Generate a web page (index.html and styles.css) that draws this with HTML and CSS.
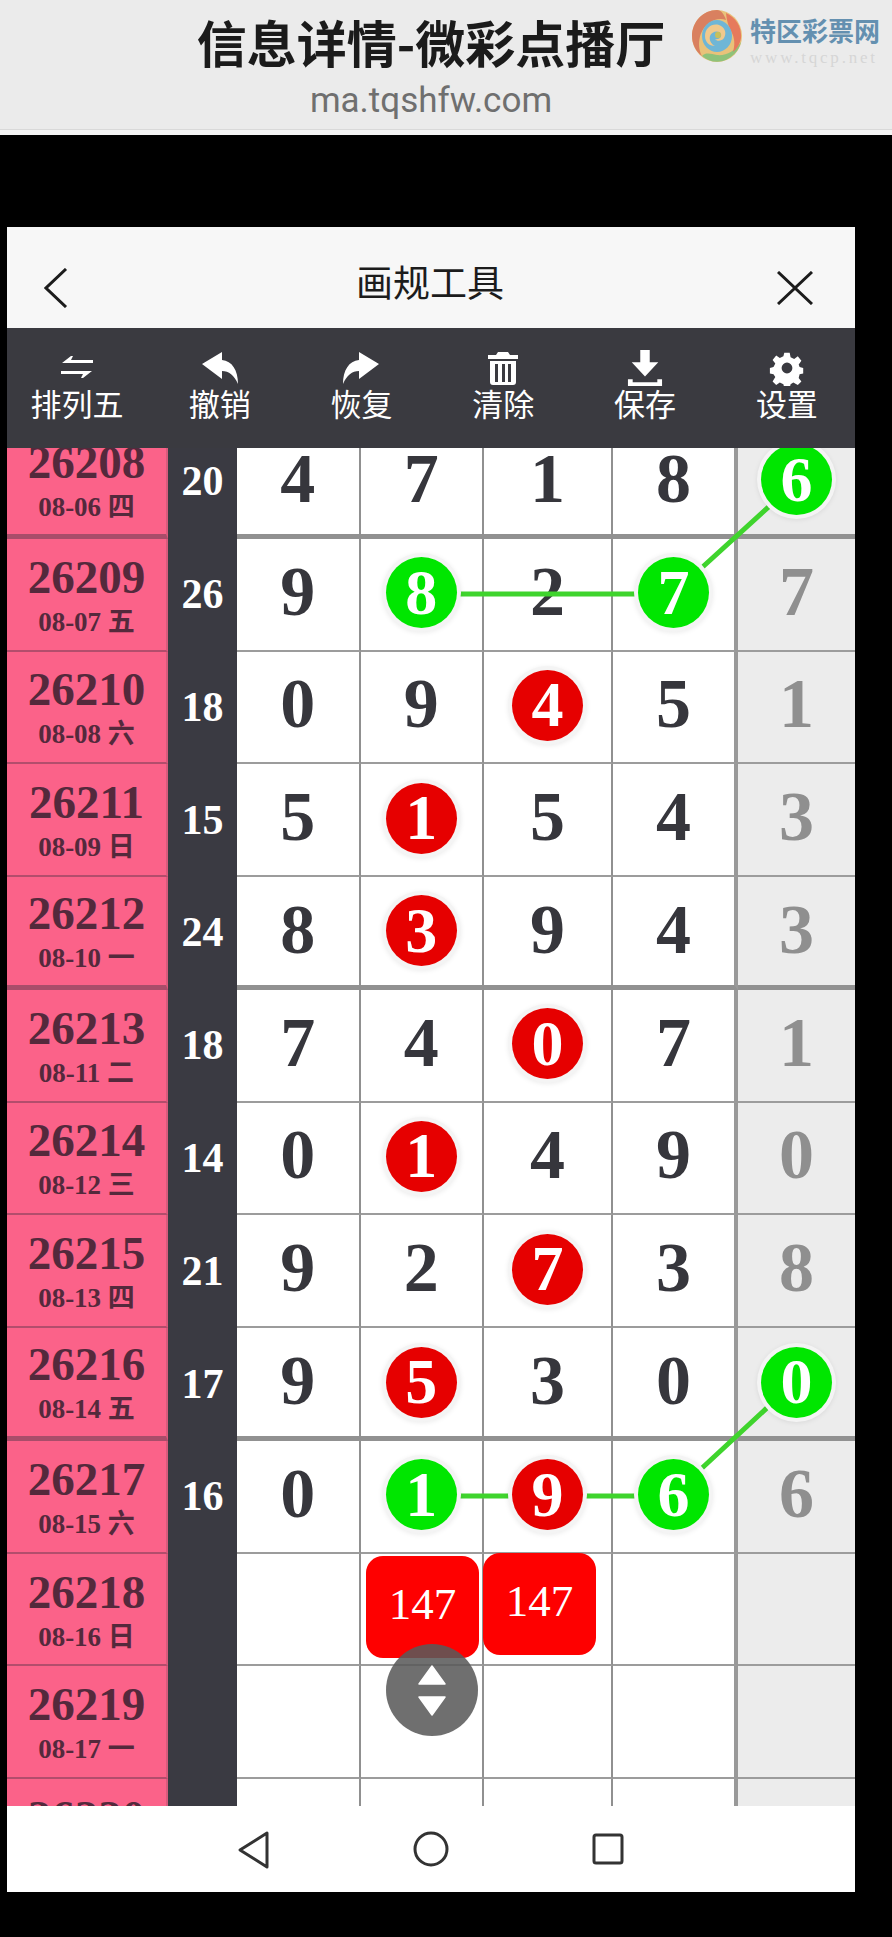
FILE: index.html
```html
<!DOCTYPE html>
<html lang="zh">
<head>
<meta charset="utf-8">
<title>画规工具</title>
<link rel="stylesheet" href="styles.css">
</head>
<body>
<header class="topbar">
  <div class="topbar-text">
    <div class="page-title">信息详情-微彩点播厅</div>
    <div class="page-url">ma.tqshfw.com</div>
  </div>
  <div class="brand">
    <svg class="brand-mark" viewBox="0 0 52 54" width="52" height="54" aria-hidden="true">
      <ellipse cx="26" cy="27" rx="25" ry="26" fill="#e9c27a"/>
      <path d="M26 1C12 1 1 13 1 27c0 8 4 16 10 20C6 38 7 22 18 14c5-4 12-5 17-3-2-6-5-10-9-10z" fill="#d9805f"/>
      <path d="M11 47c6 5 13 7 21 5 9-3 16-10 18-19-6 9-15 14-24 13-6-1-11-3-15 1z" fill="#8fc27a"/>
      <path d="M35 4c9 4 16 13 15 25-1 6-4 11-8 14 2-7 2-14-2-21-2-4-4-8-5-18z" fill="#e67a5c"/>
      <ellipse cx="26" cy="27" rx="15" ry="16" fill="#6fb6d6"/>
      <path d="M14 27c0-8 7-13 14-11 6 2 8 8 5 13-2 3-7 4-9 1 4 1 7-2 6-5-2-4-9-3-11 2-1 4 1 8 5 10-6 0-10-4-10-10z" fill="#f0c98c"/>
      <ellipse cx="27" cy="26" rx="3" ry="3.2" fill="#c7c05c"/>
    </svg>
    <div class="brand-text">
      <div class="brand-name">特区彩票网</div>
      <div class="brand-site">www.tqcp.net</div>
    </div>
  </div>
</header>

<main class="app">
  <div class="app-head">
    <svg class="head-icon" viewBox="0 0 24 40" width="24" height="40" aria-hidden="true"><path d="M22 1 2 20l20 19" fill="none" stroke="#1c1c1c" stroke-width="3"/></svg>
    <div class="app-title">画规工具</div>
    <svg class="head-icon" viewBox="0 0 36 34" width="36" height="34" aria-hidden="true"><path d="M1 1l34 32M35 1 1 33" fill="none" stroke="#1c1c1c" stroke-width="3"/></svg>
  </div>

  <nav class="toolbar">
    <div class="tool">
      <svg class="tool-icon" viewBox="0 0 36 36" width="36" height="36" aria-hidden="true"><path d="M3 13 12 6h2l-2 4h22v3zM33 21l-9 7h-2l2-4H2v-3z" fill="#fff"/></svg>
      <span>排列五</span>
    </div>
    <div class="tool">
      <svg class="tool-icon" viewBox="0 0 36 36" width="36" height="36" aria-hidden="true"><path d="M0 14 20 2v8c10 1 16 10 16 24-4-9-9-13-16-13v8z" fill="#fff"/></svg>
      <span>撤销</span>
    </div>
    <div class="tool">
      <svg class="tool-icon" viewBox="0 0 36 36" width="36" height="36" aria-hidden="true"><path d="M36 14 16 2v8C6 11 0 20 0 34c4-9 9-13 16-13v8z" fill="#fff"/></svg>
      <span>恢复</span>
    </div>
    <div class="tool">
      <svg class="tool-icon" viewBox="0 0 36 36" width="36" height="36" aria-hidden="true"><path d="M13 2h10l2 3h8v4H3V5h8zM5 11h26v21c0 2-1 3-3 3H8c-2 0-3-1-3-3zm5 3v18h3V14zm7 0v18h3V14zm6 0v18h3V14z" fill="#fff" fill-rule="evenodd"/></svg>
      <span>清除</span>
    </div>
    <div class="tool">
      <svg class="tool-icon" viewBox="0 0 38 38" width="38" height="38" aria-hidden="true"><path d="M14 0h10v13h9L19 28 5 13h9zM1 31h5v3h26v-3h5v7H1z" fill="#fff"/></svg>
      <span>保存</span>
    </div>
    <div class="tool">
      <svg class="tool-icon" viewBox="0 0 40 40" width="36" height="36" aria-hidden="true"><path d="M17 3h6l1 5 4 2 4-3 4 5-3 4 1 3 4 1v6l-4 1-1 4 3 4-4 4-5-3-3 2-1 4h-6l-1-4-4-2-4 3-4-4 3-5-2-3-4-1v-6l4-1 2-4-3-4 4-5 4 3 4-2zm3 11a6 6 0 1 0 0 12 6 6 0 0 0 0-12z" fill="#fff" fill-rule="evenodd"/></svg>
      <span>设置</span>
    </div>
  </nav>

  <section class="board">
    <div class="sheet">
      <svg class="links" viewBox="0 0 848 1480" width="848" height="1480" aria-hidden="true">
        <path d="M789 56 667 167M414 168H667M789 955 667 1068M414 1070H667" fill="none" stroke="#3fd42d" stroke-width="5"/>
      </svg>

      <div class="row major">
        <div class="issue"><b>26208</b><small>08-06 四</small></div><div class="sum">20</div>
        <div class="cell">4</div><div class="cell">7</div><div class="cell">1</div><div class="cell">8</div><div class="cell extra"><i class="ball green">6</i></div>
      </div>
      <div class="row">
        <div class="issue"><b>26209</b><small>08-07 五</small></div><div class="sum">26</div>
        <div class="cell">9</div><div class="cell"><i class="ball green">8</i></div><div class="cell">2</div><div class="cell"><i class="ball green">7</i></div><div class="cell extra">7</div>
      </div>
      <div class="row">
        <div class="issue"><b>26210</b><small>08-08 六</small></div><div class="sum">18</div>
        <div class="cell">0</div><div class="cell">9</div><div class="cell"><i class="ball red">4</i></div><div class="cell">5</div><div class="cell extra">1</div>
      </div>
      <div class="row">
        <div class="issue"><b>26211</b><small>08-09 日</small></div><div class="sum">15</div>
        <div class="cell">5</div><div class="cell"><i class="ball red">1</i></div><div class="cell">5</div><div class="cell">4</div><div class="cell extra">3</div>
      </div>
      <div class="row major">
        <div class="issue"><b>26212</b><small>08-10 一</small></div><div class="sum">24</div>
        <div class="cell">8</div><div class="cell"><i class="ball red">3</i></div><div class="cell">9</div><div class="cell">4</div><div class="cell extra">3</div>
      </div>
      <div class="row">
        <div class="issue"><b>26213</b><small>08-11 二</small></div><div class="sum">18</div>
        <div class="cell">7</div><div class="cell">4</div><div class="cell"><i class="ball red">0</i></div><div class="cell">7</div><div class="cell extra">1</div>
      </div>
      <div class="row">
        <div class="issue"><b>26214</b><small>08-12 三</small></div><div class="sum">14</div>
        <div class="cell">0</div><div class="cell"><i class="ball red">1</i></div><div class="cell">4</div><div class="cell">9</div><div class="cell extra">0</div>
      </div>
      <div class="row">
        <div class="issue"><b>26215</b><small>08-13 四</small></div><div class="sum">21</div>
        <div class="cell">9</div><div class="cell">2</div><div class="cell"><i class="ball red">7</i></div><div class="cell">3</div><div class="cell extra">8</div>
      </div>
      <div class="row major">
        <div class="issue"><b>26216</b><small>08-14 五</small></div><div class="sum">17</div>
        <div class="cell">9</div><div class="cell"><i class="ball red">5</i></div><div class="cell">3</div><div class="cell">0</div><div class="cell extra"><i class="ball green">0</i></div>
      </div>
      <div class="row">
        <div class="issue"><b>26217</b><small>08-15 六</small></div><div class="sum">16</div>
        <div class="cell">0</div><div class="cell"><i class="ball green">1</i></div><div class="cell"><i class="ball red">9</i></div><div class="cell"><i class="ball green">6</i></div><div class="cell extra">6</div>
      </div>
      <div class="row">
        <div class="issue"><b>26218</b><small>08-16 日</small></div><div class="sum"></div>
        <div class="cell"></div><div class="cell"><span class="tile tile-low">147</span></div><div class="cell"><span class="tile tile-high">147</span></div><div class="cell"></div><div class="cell extra"></div>
      </div>
      <div class="row">
        <div class="issue"><b>26219</b><small>08-17 一</small></div><div class="sum"></div>
        <div class="cell"></div><div class="cell"></div><div class="cell"></div><div class="cell"></div><div class="cell extra"></div>
      </div>
      <div class="row">
        <div class="issue"><b>26220</b><small>08-18 二</small></div><div class="sum"></div>
        <div class="cell"></div><div class="cell"></div><div class="cell"></div><div class="cell"></div><div class="cell extra"></div>
      </div>
    </div>

    <div class="scroll-btn">
      <svg viewBox="0 0 30 52" width="30" height="52" aria-hidden="true"><path d="M15 2 28 20H2zM2 33h26L15 51z" fill="#fff" stroke="#fff" stroke-width="1.5" stroke-linejoin="round"/></svg>
    </div>
  </section>

  <footer class="sysnav">
    <svg viewBox="0 0 32 38" width="32" height="38" aria-hidden="true"><path d="M29 2v34L2 19z" fill="none" stroke="#333" stroke-width="3" stroke-linejoin="round"/></svg>
    <svg viewBox="0 0 36 36" width="36" height="36" aria-hidden="true"><circle cx="18" cy="18" r="16" fill="none" stroke="#333" stroke-width="3"/></svg>
    <svg viewBox="0 0 32 32" width="32" height="32" aria-hidden="true"><rect x="2" y="2" width="28" height="28" rx="2" fill="none" stroke="#333" stroke-width="3"/></svg>
  </footer>
</main>
</body>
</html>
```

FILE: styles.css
```css
* { box-sizing: border-box; }

html, body { margin: 0; padding: 0; background: #000; }

body {
  width: 892px;
  height: 1937px;
  overflow: hidden;
  font-family: "Noto Sans CJK SC", "Noto Sans", sans-serif;
}

/* browser title strip */
.topbar {
  position: relative;
  height: 135px;
  background: #ebebeb;
  border-bottom: 5px solid #f4f4f4;
  box-shadow: inset 0 -1px 0 #d9d9d9;
  display: flex;
  justify-content: center;
}

.topbar-text { text-align: center; margin-left: -30px; }

.page-title {
  margin-top: 11px;
  font-size: 50px;
  line-height: 60px;
  font-weight: 700;
  color: #1b1b1b;
  white-space: nowrap;
}

.page-url {
  margin-top: 9px;
  font-family: "Roboto", "Noto Sans", sans-serif;
  font-size: 35px;
  line-height: 42px;
  color: #6f6f6f;
}

.brand {
  position: absolute;
  left: 691px;
  top: 9px;
  display: flex;
  gap: 7px;
}

.brand-name {
  margin-top: 3px;
  font-size: 26px;
  line-height: 36px;
  font-weight: 700;
  color: #6490b0;
  white-space: nowrap;
}

.brand-site {
  margin-top: 2px;
  font-family: "Liberation Serif", serif;
  font-size: 17px;
  line-height: 15px;
  letter-spacing: 2.8px;
  color: #d6d6d6;
  white-space: nowrap;
}

/* phone window */
.app {
  width: 848px;
  margin: 92px 0 0 7px;
  display: flex;
  flex-direction: column;
}

.app-head {
  height: 101px;
  background: #f7f7f7;
  padding: 20px 42px 0 37px;
  display: flex;
  align-items: center;
  justify-content: space-between;
}

.app-title {
  margin: -14px 0 0 15px;
  font-size: 37px;
  line-height: 48px;
  color: #1c1c1c;
}

.toolbar {
  height: 120px;
  background: #3a3a40;
  display: grid;
  grid-template-columns: repeat(6, 141.8px);
}

.tool {
  display: flex;
  flex-direction: column;
  align-items: center;
  padding-top: 22px;
  color: #fff;
  font-size: 31px;
  line-height: 40px;
}

.tool:first-child { padding-right: 2px; }

.tool-icon { display: block; height: 36px; margin-bottom: -3px; }

/* lottery table */
.board {
  position: relative;
  height: 1358px;
  overflow: hidden;
  background: #fff;
}

.sheet { position: relative; margin-top: -22px; }

.links {
  position: absolute;
  left: 0;
  top: 0;
  z-index: 2;
}

.row {
  display: grid;
  grid-template-columns: 161px 69px 123.5px 123.5px 129px 125px 117px;
  height: 112.77px;
}

.issue, .sum, .cell {
  display: flex;
  align-items: center;
  justify-content: center;
}

.issue {
  flex-direction: column;
  padding-top: 1px;
  background: #fb6289;
  color: #54293c;
  font-family: "Liberation Serif", "Noto Sans CJK SC", serif;
  border-bottom: 2px solid #b34d6c;
  border-right: 2px solid #d85a7c;
}

.issue b {
  font-size: 47px;
  line-height: 48px;
  font-weight: 700;
}

.issue small {
  font-size: 27px;
  line-height: 30px;
  font-weight: 700;
  margin-top: 6px;
}

.sum {
  background: #3a3a42;
  color: #fff;
  font-family: "Liberation Serif", serif;
  font-size: 42px;
  font-weight: 700;
  padding-bottom: 2px;
}

.cell {
  position: relative;
  padding-bottom: 5px;
  border-right: 2px solid #909090;
  border-bottom: 2px solid #9c9c9c;
  color: #36363c;
  font-family: "Liberation Serif", serif;
  font-size: 70px;
  line-height: 1;
  font-weight: 700;
}

.row .cell:nth-last-child(2) { border-right: 4px solid #999; }

.cell.extra {
  background: #ececec;
  color: #8f8f8f;
  border-right: 0;
}

.major .issue {
  border-bottom: 5px solid #a94d6a;
  padding-bottom: 0;
  padding-top: 0;
}

.major .cell {
  border-bottom: 5px solid #919191;
  padding-bottom: 2px;
}

.ball {
  position: relative;
  z-index: 3;
  width: 71px;
  height: 71px;
  margin-top: 2px;
  border-radius: 50%;
  display: flex;
  align-items: center;
  justify-content: center;
  font-style: normal;
  font-size: 64px;
  color: #fff;
  box-shadow: 0 0 0 4px #f4f4f4, 0 1px 5px 4px rgba(0, 0, 0, .08);
}

.ball.green { background: #00e600; }
.ball.red { background: #e60000; }

.tile {
  position: absolute;
  width: 113px;
  height: 102px;
  border-radius: 17px;
  background: #fe0000;
  color: #fff;
  font-size: 45px;
  font-weight: 400;
  line-height: 96px;
  text-align: center;
  z-index: 3;
}

.tile-low { top: 2px; left: 5.5px; }
.tile-high { top: -1px; left: -1px; }

.scroll-btn {
  position: absolute;
  left: 379px;
  top: 1196px;
  z-index: 4;
  width: 92px;
  height: 92px;
  border-radius: 50%;
  background: rgba(90, 90, 90, .87);
  display: flex;
  align-items: center;
  justify-content: center;
}

/* android navigation */
.sysnav {
  position: relative;
  height: 86px;
  background: #fff;
}

.sysnav svg { position: absolute; top: 25px; }
.sysnav svg:nth-child(1) { left: 231px; }
.sysnav svg:nth-child(2) { left: 406px; }
.sysnav svg:nth-child(3) { left: 585px; top: 27px; }
```
